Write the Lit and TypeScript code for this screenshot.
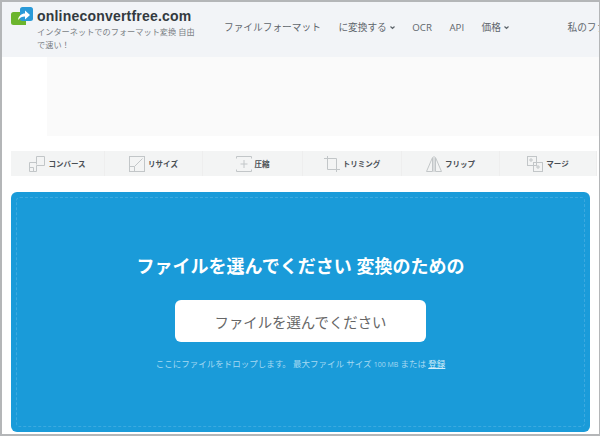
import { LitElement, html, css, svg } from 'lit'
import { customElement } from 'lit/decorators.js'

const TOOLS = [
    {
        label: 'コンバース',
        width: 94,
        icon: svg`<path d="M7.500 8.500V.500h8v9h-8 M.500 6.500h7 M.500 6.500v9h7v-6 M.500 11.500h4v4"/>`,
    },
    {
        label: 'リサイズ',
        width: 98,
        icon: svg`<rect x=".500" y=".500" width="15" height="15"/><path d="M.500 10.500h5v5 M5.500 10.500l8-8"/>`,
    },
    {
        label: '圧縮',
        width: 100,
        icon: svg`<path d="M.500 2.500v-2h15v2 M.500 13.500v2h15v-2 M8 4v8 M4.500 8h7"/>`,
    },
    {
        label: 'トリミング',
        width: 99,
        icon: svg`<path d="M3.500 0v13.500H16 M0 2.500h12.500V16"/>`,
    },
    {
        label: 'フリップ',
        width: 98,
        icon: svg`<path d="M6.500 1.500v14H.500z M8 0v16 M9.500 1.500l6 14h-6z"/>`,
    },
    {
        label: 'マージ',
        width: 97,
        icon: svg`<rect x=".500" y=".500" width="9" height="9"/><rect x="6.500" y="6.500" width="9" height="9"/><path d="M3 3h2v2H3z M10 10h2v2h-2z"/>`,
    },
]

@customElement('app-root')
export class AppRoot extends LitElement {
    static styles = css`
        :host {
            display: block;
            width: 600px;
            height: 436px;
            box-sizing: border-box;
            overflow: hidden;
            background: #fff;
            border: solid #b4b6b8;
            border-width: 2px 1px 2px 2px;
            font-family: 'Open Sans', 'Noto Sans CJK JP', sans-serif;
        }

        .header {
            display: flex;
            align-items: flex-start;
            box-sizing: border-box;
            height: 55px;
            padding: 5px 0 0 9px;
            background: #f2f4f7;
            white-space: nowrap;
            overflow: hidden;
        }

        .logo {
            flex: none;
            margin: 0 4px 0 0;
        }

        .brand {
            flex: none;
            width: 165px;
            white-space: normal;
        }

        .brand-name {
            font-family: 'Liberation Sans', sans-serif;
            font-size: 14px;
            font-weight: 700;
            line-height: 18px;
            letter-spacing: 0.2px;
            color: #333a40;
        }

        .tagline {
            font-size: 8.200px;
            line-height: 13px;
            color: #7a7f85;
        }

        .nav {
            display: flex;
            align-items: center;
            gap: 17.500px;
            height: 40px;
            margin-left: 22px;
            font-size: 9.700px;
            color: #5f666c;
        }

        .nav span {
            flex: none;
        }

        .nav .account {
            margin-left: 41px;
        }

        .caret {
            display: inline-block;
            margin-left: 3px;
            vertical-align: 1px;
        }

        .ad-row {
            height: 79px;
            padding-left: 45px;
        }

        .ad {
            height: 100%;
            background: #fafafa;
        }

        .tools {
            display: flex;
            height: 25px;
            margin: 15px 2px 16px 9px;
            background: #f3f4f4;
        }

        .tool {
            display: flex;
            align-items: center;
            justify-content: center;
            gap: 3px;
            box-sizing: border-box;
            border-right: 1px solid #eeeeee;
            font-size: 7.500px;
            font-weight: 700;
            color: #4a4f54;
        }

        .tool svg {
            flex: none;
            fill: none;
            stroke: #c2c6c8;
            stroke-width: 1;
        }

        .drop {
            box-sizing: border-box;
            width: 579px;
            height: 240px;
            margin-left: 9px;
            padding: 5px;
            border-radius: 6px;
            background: #1a9bd9;
        }

        .drop-inner {
            display: flex;
            flex-direction: column;
            align-items: center;
            box-sizing: border-box;
            height: 100%;
            padding-top: 55px;
            border: 1px dashed #3ca9df;
            border-radius: 4px;
            color: #fff;
        }

        h1 {
            margin: 0;
            font-size: 18px;
            font-weight: 700;
            line-height: 26px;
        }

        .pick {
            display: flex;
            align-items: center;
            justify-content: center;
            width: 251px;
            height: 42px;
            margin-top: 21px;
            border-radius: 6px;
            background: #fff;
            font-size: 14.400px;
            color: #666;
        }

        .hint {
            margin-top: 16px;
            font-size: 8.500px;
            line-height: 12px;
            color: #a5d9f2;
        }

        .hint .small {
            font-size: 7px;
        }

        .hint u {
            color: #d4eefa;
        }
    `

    render() {
        return html`
            <header class="header">
                <svg class="logo" width="22" height="18" viewBox="0 0 22 18">
                    <path d="M0 7.500a2.500 2.500 0 0 1 2.500-2.500H15v13H2.500A2.500 2.500 0 0 1 0 15.500z" fill="#6cb52d"/>
                    <path d="M9 2.500A2.500 2.500 0 0 1 11.500 0h8A2.500 2.500 0 0 1 22 2.500v9a2.500 2.500 0 0 1-2.500 2.500h-8A2.500 2.500 0 0 1 9 11.500z" fill="#2a9ad8"/>
                    <path d="M7 13c.5-4 3.500-6.500 7-6.500V3.500l5 4.500-5 4.500V9.500c-3 0-5 1-7 3.500z" fill="#fff"/>
                </svg>
                <div class="brand">
                    <div class="brand-name">onlineconvertfree.com</div>
                    <div class="tagline">インターネットでのフォーマット変換 自由で速い！</div>
                </div>
                <nav class="nav">
                    <span>ファイルフォーマット</span>
                    <span>に変換する${this.caret()}</span>
                    <span>OCR</span>
                    <span>API</span>
                    <span>価格${this.caret()}</span>
                    <span class="account">私のファイル</span>
                </nav>
            </header>
            <div class="ad-row"><div class="ad"></div></div>
            <div class="tools">
                ${TOOLS.map(
                    (t) => html`
                        <div class="tool" style="width:${t.width}px">
                            <svg width="16" height="16" viewBox="0 0 16 16">${t.icon}</svg>
                            <span>${t.label}</span>
                        </div>
                    `
                )}
            </div>
            <section class="drop">
                <div class="drop-inner">
                    <h1>ファイルを選んでください 変換のための</h1>
                    <div class="pick">ファイルを選んでください</div>
                    <div class="hint">
                        ここにファイルをドロップします。 最大ファイル サイズ
                        <span class="small">100 MB</span> または <u>登録</u>
                    </div>
                </div>
            </section>
        `
    }

    private caret() {
        return html`<svg class="caret" width="5" height="4" viewBox="0 0 5 4">
            <path d="M0.500 0.500l2 2 2-2" fill="none" stroke="#5f666c" stroke-width="1.200"/>
        </svg>`
    }
}
